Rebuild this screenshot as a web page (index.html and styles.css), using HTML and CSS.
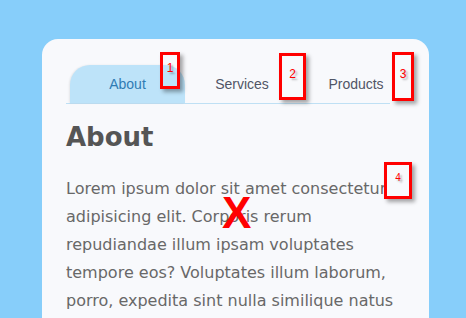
FILE: index.html
```html
<!DOCTYPE html>
<html>
<head>
    <title>Tabs</title>
    <meta name="viewport" content="width=device-width, initial-scale=1.0">
    <link rel="stylesheet" href="styles.css">
</head>
<body>
    <div class="card">
        <ul class="tabs">
            <li class="tab active">About</li>
            <li class="tab">Services</li>
            <li class="tab">Products</li>
        </ul>

        <div class="panel">
            <h1>About</h1>
            <p>Lorem ipsum dolor sit amet consectetur adipisicing elit. Corporis rerum repudiandae illum ipsam voluptates tempore eos? Voluptates illum laborum, porro, expedita sint nulla similique natus</p>
        </div>
    </div>

    <!-- annotation marks drawn over the page -->
    <div class="mark mark-1"><span>1</span></div>
    <div class="mark mark-2"><span>2</span></div>
    <div class="mark mark-3"><span>3</span></div>
    <div class="mark mark-4 small"><span>4</span></div>
    <div class="cross">X</div>
</body>
</html>
```

FILE: styles.css
```css
html, body {
    height: 318px;
    overflow: hidden;
}

body {
    margin: 0;
    background-color: #87cefa;
    position: relative;
}

.card {
    width: 339px;
    height: 400px;
    margin: 39px 0 0 42px;
    padding: 26px 24px;
    background-color: #f8f9fc;
    border-radius: 16px;
}

.tabs {
    display: flex;
    list-style: none;
    margin: 0 15px 0 0;
    padding: 0 0 0 4px;
    border-bottom: 1px solid #bfe0f4;
}

.tab {
    flex-shrink: 0;
    width: 114px;
    height: 38px;
    line-height: 38px;
    text-align: center;
    font-family: "Liberation Sans", Arial, sans-serif;
    font-size: 14px;
    color: #505566;
    border-radius: 20px 20px 0 0;
}

.tab.active {
    width: 115px;
    background-color: #bde3f9;
    color: #2f7cb4;
    box-shadow: -1px 0 2px rgba(0,0,0,0.08);
}

.panel h1 {
    margin: 16px 0 0;
    font-family: "DejaVu Sans", sans-serif;
    font-size: 26px;
    line-height: 34px;
    font-weight: bold;
    color: #555555;
}

.panel p {
    margin: 21px 0 0;
    font-family: "DejaVu Sans", sans-serif;
    font-size: 16px;
    line-height: 28px;
    color: #686868;
}

.mark {
    position: absolute;
    box-sizing: border-box;
    border: 3px solid #ff0000;
    box-shadow: 3px 3px 4px rgba(0,0,0,0.35);
    display: flex;
    justify-content: center;
    align-items: center;
    padding-bottom: 6px;
    font-family: "Liberation Sans", Arial, sans-serif;
    font-size: 12px;
    color: #ff0000;
    text-shadow: 2px 2px 2px rgba(0,0,0,0.3);
}

.mark.small {
    font-size: 10px;
}

.mark-1 { left: 160px; top: 52px; width: 20px; height: 37px; }
.mark-2 { left: 279px; top: 53px; width: 27px; height: 47px; }
.mark-3 { left: 392px; top: 52px; width: 22px; height: 49px; }
.mark-4 { left: 384px; top: 162px; width: 28px; height: 37px; }

.cross {
    position: absolute;
    left: 222px;
    top: 191px;
    font-family: "Liberation Sans", Arial, sans-serif;
    font-size: 44px;
    line-height: 1;
    font-weight: bold;
    color: #ff0000;
}
```
